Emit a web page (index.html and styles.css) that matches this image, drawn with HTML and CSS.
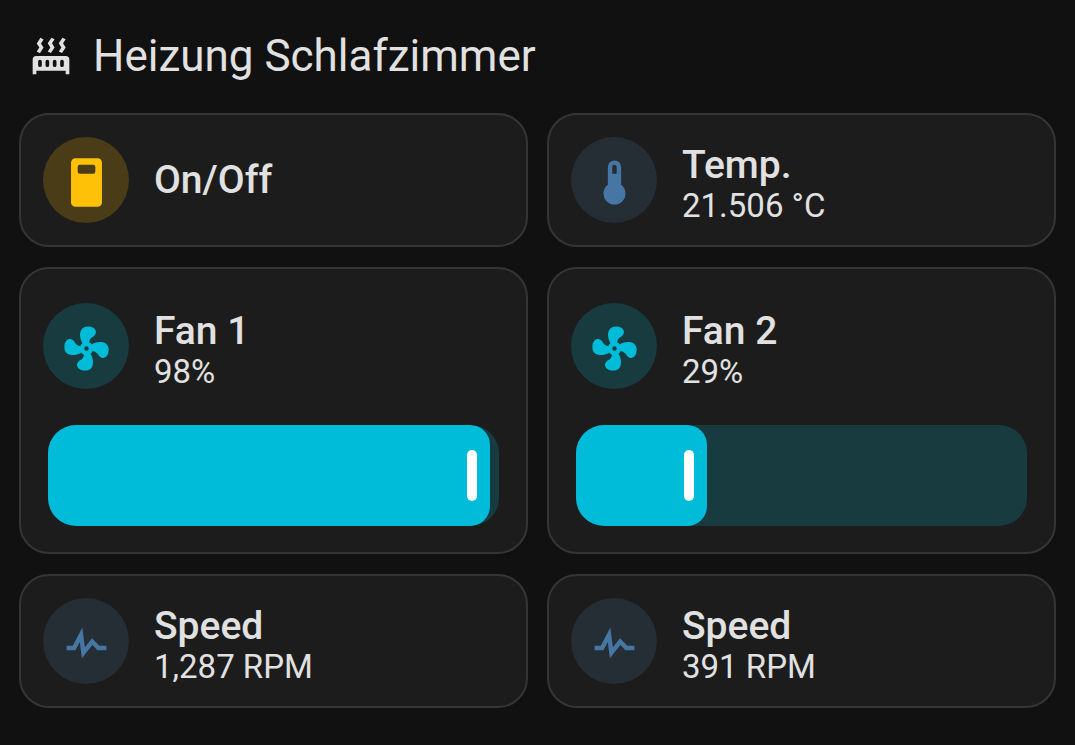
FILE: index.html
```html
<!DOCTYPE html>
<html lang="de">

<head>
    <meta charset="UTF-8">
    <meta name="viewport" content="width=device-width, initial-scale=1.0">
    <title>Heizung Schlafzimmer</title>
    <link rel="stylesheet" href="styles.css">
</head>

<body>
    <header class="header">
        <svg class="header-icon" viewBox="0 0 24 24" aria-hidden="true">
            <path fill-rule="evenodd" d="M7.95,3L6.53,5.19L7.95,7.4H7.94L5.95,10.5L4.22,9.6L5.64,7.39L4.22,5.19L6.22,2.09L7.95,3M13.95,2.89L12.53,5.1L13.95,7.3L13.94,7.31L11.95,10.4L10.22,9.5L11.64,7.3L10.22,5.1L12.22,2L13.95,2.89M20,2.89L18.56,5.1L20,7.3V7.31L18,10.4L16.25,9.5L17.67,7.3L16.25,5.1L18.25,2L20,2.89M2,22V14A2,2 0 0,1 4,12H20A2,2 0 0,1 22,14V22H20V20H4V22H2M6,14A1,1 0 0,0 5,15V17A1,1 0 0,0 7,17V15A1,1 0 0,0 6,14M10,14A1,1 0 0,0 9,15V17A1,1 0 0,0 11,17V15A1,1 0 0,0 10,14M14,14A1,1 0 0,0 13,15V17A1,1 0 0,0 15,17V15A1,1 0 0,0 14,14M18,14A1,1 0 0,0 17,15V17A1,1 0 0,0 19,17V15A1,1 0 0,0 18,14Z"/>
        </svg>
        <h1 class="header-title">Heizung Schlafzimmer</h1>
    </header>

    <main class="cards">
        <button class="card row" type="button">
            <span class="shape amber">
                <svg class="icon" viewBox="0 0 24 24" aria-hidden="true">
                    <path fill-rule="evenodd" d="M7,1H17A2,2 0 0,1 19,3V21A2,2 0 0,1 17,23H7A2,2 0 0,1 5,21V3A2,2 0 0,1 7,1M9,4A1,1 0 0,0 8,5V7A1,1 0 0,0 9,8H15A1,1 0 0,0 16,7V5A1,1 0 0,0 15,4H9Z"/>
                </svg>
            </span>
            <span class="info"><span class="name">On/Off</span></span>
        </button>

        <section class="card row">
            <span class="shape blue">
                <svg class="icon" viewBox="0 0 24 24" aria-hidden="true">
                    <path fill-rule="evenodd" d="M15,13V5A3,3 0 0,0 9,5V13A5,5 0 1,0 15,13M12,4A1,1 0 0,1 13,5V8H11V5A1,1 0 0,1 12,4Z"/>
                </svg>
            </span>
            <span class="info">
                <span class="name">Temp.</span>
                <span class="state">21.506 °C</span>
            </span>
        </section>

        <section class="card fan">
            <div class="row">
                <span class="shape cyan">
                    <svg class="icon" viewBox="0 0 24 24" aria-hidden="true">
                        <path id="fan" d="M12,11A1,1 0 0,0 11,12A1,1 0 0,0 12,13A1,1 0 0,0 13,12A1,1 0 0,0 12,11M12.5,2C17,2 17.11,5.57 14.75,6.75C13.76,7.24 13.32,8.29 13.13,9.22C13.61,9.42 14.03,9.73 14.35,10.13C18.05,8.13 22.03,8.92 22.03,12.5C22.03,17 18.46,17.1 17.28,14.73C16.78,13.74 15.72,13.3 14.79,13.11C14.59,13.59 14.28,14 13.88,14.34C15.87,18.03 15.08,22 11.5,22C7,22 6.91,18.42 9.27,17.24C10.25,16.75 10.69,15.71 10.89,14.79C10.4,14.59 9.97,14.27 9.65,13.87C5.96,15.85 2,15.07 2,11.5C2,7 5.56,6.89 6.74,9.26C7.24,10.25 8.29,10.68 9.22,10.87C9.41,10.39 9.73,9.97 10.14,9.65C8.15,5.96 8.94,2 12.5,2Z"/>
                    </svg>
                </span>
                <span class="info">
                    <label class="name" for="fan1">Fan 1</label>
                    <span class="state">98%</span>
                </span>
            </div>
            <div class="slider">
                <div class="slider-fill" style="width: 98%"></div>
                <input class="slider-input" type="range" id="fan1" min="0" max="100" value="98">
            </div>
        </section>

        <section class="card fan">
            <div class="row">
                <span class="shape cyan">
                    <svg class="icon" viewBox="0 0 24 24" aria-hidden="true"><use href="#fan"/></svg>
                </span>
                <span class="info">
                    <label class="name" for="fan2">Fan 2</label>
                    <span class="state">29%</span>
                </span>
            </div>
            <div class="slider">
                <div class="slider-fill" style="width: 29%"></div>
                <input class="slider-input" type="range" id="fan2" min="0" max="100" value="29">
            </div>
        </section>

        <section class="card row">
            <span class="shape blue">
                <svg class="icon" viewBox="0 0 24 24" aria-hidden="true">
                    <path id="pulse" d="M3,13H5.79L10.1,4.79L11.28,13.75L14.5,9.66L17.83,13H21V15H17L14.67,12.67L9.92,18.73L8.94,11.31L7,15H3V13Z"/>
                </svg>
            </span>
            <span class="info">
                <span class="name">Speed</span>
                <span class="state">1,287 RPM</span>
            </span>
        </section>

        <section class="card row">
            <span class="shape blue">
                <svg class="icon" viewBox="0 0 24 24" aria-hidden="true"><use href="#pulse"/></svg>
            </span>
            <span class="info">
                <span class="name">Speed</span>
                <span class="state">391 RPM</span>
            </span>
        </section>
    </main>

    <script src="script.js"></script>
</body>

</html>
```

FILE: styles.css
```css
* {
    box-sizing: border-box;
}

body {
    margin: 0;
    padding: 0 19px 20px;
    background: #111111;
    color: #e1e1e1;
    font-family: Roboto, "Liberation Sans", sans-serif;
}

.header {
    display: flex;
    align-items: center;
    gap: 20px;
    padding: 29px 10px 30px;
}

.header-icon {
    width: 44px;
    height: 44px;
    fill: currentColor;
}

.header-title {
    margin: 0;
    font-size: 44px;
    font-weight: 400;
    line-height: 54px;
}

.cards {
    display: grid;
    grid-template-columns: 1fr 1fr;
    gap: 20px 19px;
}

.card {
    padding: 22px;
    border: 2px solid #353535;
    border-radius: 30px;
    background: #1c1c1c;
    color: inherit;
    font-family: inherit;
    text-align: left;
}

.row {
    display: flex;
    align-items: center;
    gap: 25px;
}

.shape {
    display: flex;
    justify-content: center;
    flex: none;
    width: 86px;
    height: 86px;
    padding-top: 19px;
    border-radius: 50%;
}

.icon {
    width: 53px;
    height: 53px;
    fill: currentColor;
}

.amber {
    background: #493c17;
    color: #ffc107;
}

.blue {
    background: #252d35;
    color: #4676a3;
}

.cyan {
    background: #173b3f;
    color: #00bcd8;
}

.info {
    display: flex;
    flex-direction: column;
}

.name {
    font-size: 39px;
    font-weight: 500;
    line-height: 52px;
}

.state {
    font-size: 33px;
    line-height: 30px;
}

.fan {
    padding: 34px 22px 26px;
}

.slider {
    position: relative;
    height: 101px;
    margin: 36px 5px 0;
    border-radius: 28px;
    background: #173b3f;
    overflow: hidden;
}

.slider-fill {
    display: flex;
    align-items: center;
    justify-content: flex-end;
    height: 100%;
    padding-right: 13px;
    border-radius: 0 20px 20px 0;
    background: #00bcd8;
}

.slider-fill::after {
    content: "";
    width: 10px;
    height: 51px;
    border-radius: 5px;
    background: #ffffff;
}

/* invisible range input on top of the drawn bar */
.slider-input {
    position: absolute;
    inset: 0;
    width: 100%;
    height: 100%;
    margin: 0;
    opacity: 0;
    cursor: pointer;
}
```

FILE: script.js
```js
document.querySelectorAll(".slider-input").forEach(function (input) {
    input.addEventListener("input", function () {
        const card = input.closest(".fan");
        card.querySelector(".slider-fill").style.width = input.value + "%";
        card.querySelector(".state").textContent = input.value + "%";
    });
});
```
